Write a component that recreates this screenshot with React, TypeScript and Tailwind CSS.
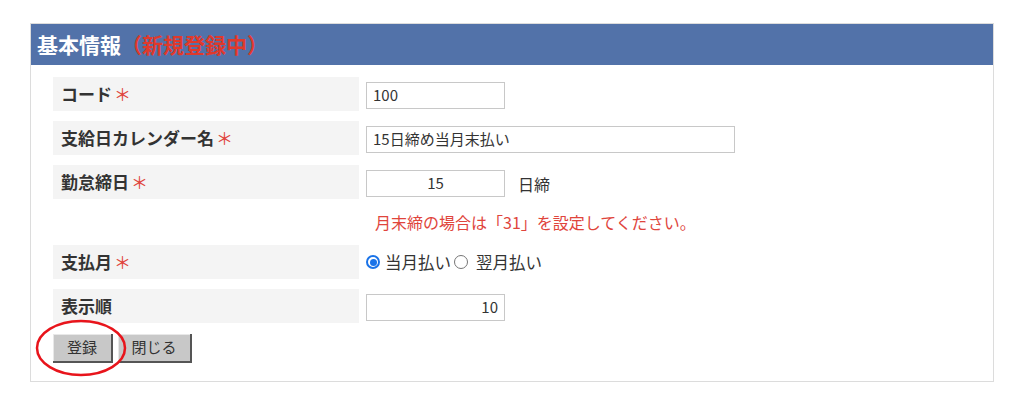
import React from "react";

const FONT = { fontFamily: '"Noto Sans CJK JP", "Noto Sans", sans-serif' };

function Req() {
  return <span className="ml-[2px] font-normal text-[#e0453c]">＊</span>;
}

function Label({ children, req }: { children: React.ReactNode; req?: boolean }) {
  return (
    <div className="flex h-[34px] items-center bg-[#f4f4f4] pl-[8px] text-[17px] font-bold text-[#333]">
      {children}
      {req && <Req />}
    </div>
  );
}

function TextBox({ value, w = 139, align = "left" }: { value: string; w?: number; align?: "left" | "center" | "right" }) {
  const alignCls = align === "center" ? "justify-center" : align === "right" ? "justify-end" : "justify-start";
  return (
    <div
      className={`mt-[5px] flex h-[27px] items-center border border-[#c8c8c8] bg-white px-[6px] text-[15px] text-[#333] ${alignCls}`}
      style={{ width: w }}
    >
      {value}
    </div>
  );
}

function Radio({ checked }: { checked?: boolean }) {
  return checked ? (
    <span className="flex h-[14px] w-[14px] shrink-0 items-center justify-center rounded-full border-[2px] border-[#1a73e8] bg-white">
      <span className="h-[7px] w-[7px] rounded-full bg-[#1a73e8]" />
    </span>
  ) : (
    <span className="block h-[14px] w-[14px] shrink-0 rounded-full border-[1.5px] border-[#767676] bg-white" />
  );
}

function Btn({ children, w }: { children: React.ReactNode; w: number }) {
  return (
    <div
      className="flex h-[29px] items-center justify-center border-b-[2px] border-r-[2px] border-b-[#555] border-r-[#555] bg-[#c8c8c8] pb-[1px] text-[15px] text-[#333] shadow-[inset_1px_1px_0_#e8e8e8]"
      style={{ width: w }}
    >
      {children}
    </div>
  );
}

export default function App() {
  return (
    <div className="h-[416px] w-[1024px] bg-white pt-[23px] pl-[30px]" style={FONT}>
      <div className="relative w-[964px] border border-[#dcdcdc] bg-white pb-[18px]">
        <div className="flex h-[41px] items-center bg-[#5272a9] pl-[6px] text-[21px] font-bold">
          <span className="text-white">基本情報</span>
          <span className="text-[#e0392b]">（新規登録中）</span>
        </div>

        <div className="grid grid-cols-[306px_1fr] gap-x-[7px] gap-y-[10px] pl-[22px] pt-[12px]">
          <Label req>コード</Label>
          <div>
            <TextBox value="100" />
          </div>

          <Label req>支給日カレンダー名</Label>
          <div>
            <TextBox value="15日締め当月末払い" w={369} />
          </div>

          <Label req>勤怠締日</Label>
          <div className="flex items-start gap-[13px]">
            <TextBox value="15" align="center" />
            <span className="mt-[5px] flex h-[27px] items-center text-[16px] text-[#333]">日締</span>
          </div>

          <div />
          <div className="flex h-[26px] items-center pl-[9px] text-[16px] text-[#e0453c]">
            月末締の場合は「31」を設定してください。
          </div>

          <Label req>支払月</Label>
          <div className="flex items-center text-[16.5px] text-[#333]">
            <Radio checked />
            <span className="ml-[5px]">当月払い</span>
            <span className="ml-[3px]">
              <Radio />
            </span>
            <span className="ml-[8px]">翌月払い</span>
          </div>

          <Label>表示順</Label>
          <div>
            <TextBox value="10" align="right" />
          </div>
        </div>

        <div className="flex gap-[5px] pl-[22px] pt-[11px]">
          <Btn w={60}>登録</Btn>
          <Btn w={74}>閉じる</Btn>
        </div>

        <svg className="pointer-events-none absolute left-[3px] top-[294px]" width="94" height="60" viewBox="0 0 94 60">
          <ellipse cx="47" cy="30" rx="44" ry="27" fill="none" stroke="#e8141b" strokeWidth="2.5" />
        </svg>
      </div>
    </div>
  );
}
